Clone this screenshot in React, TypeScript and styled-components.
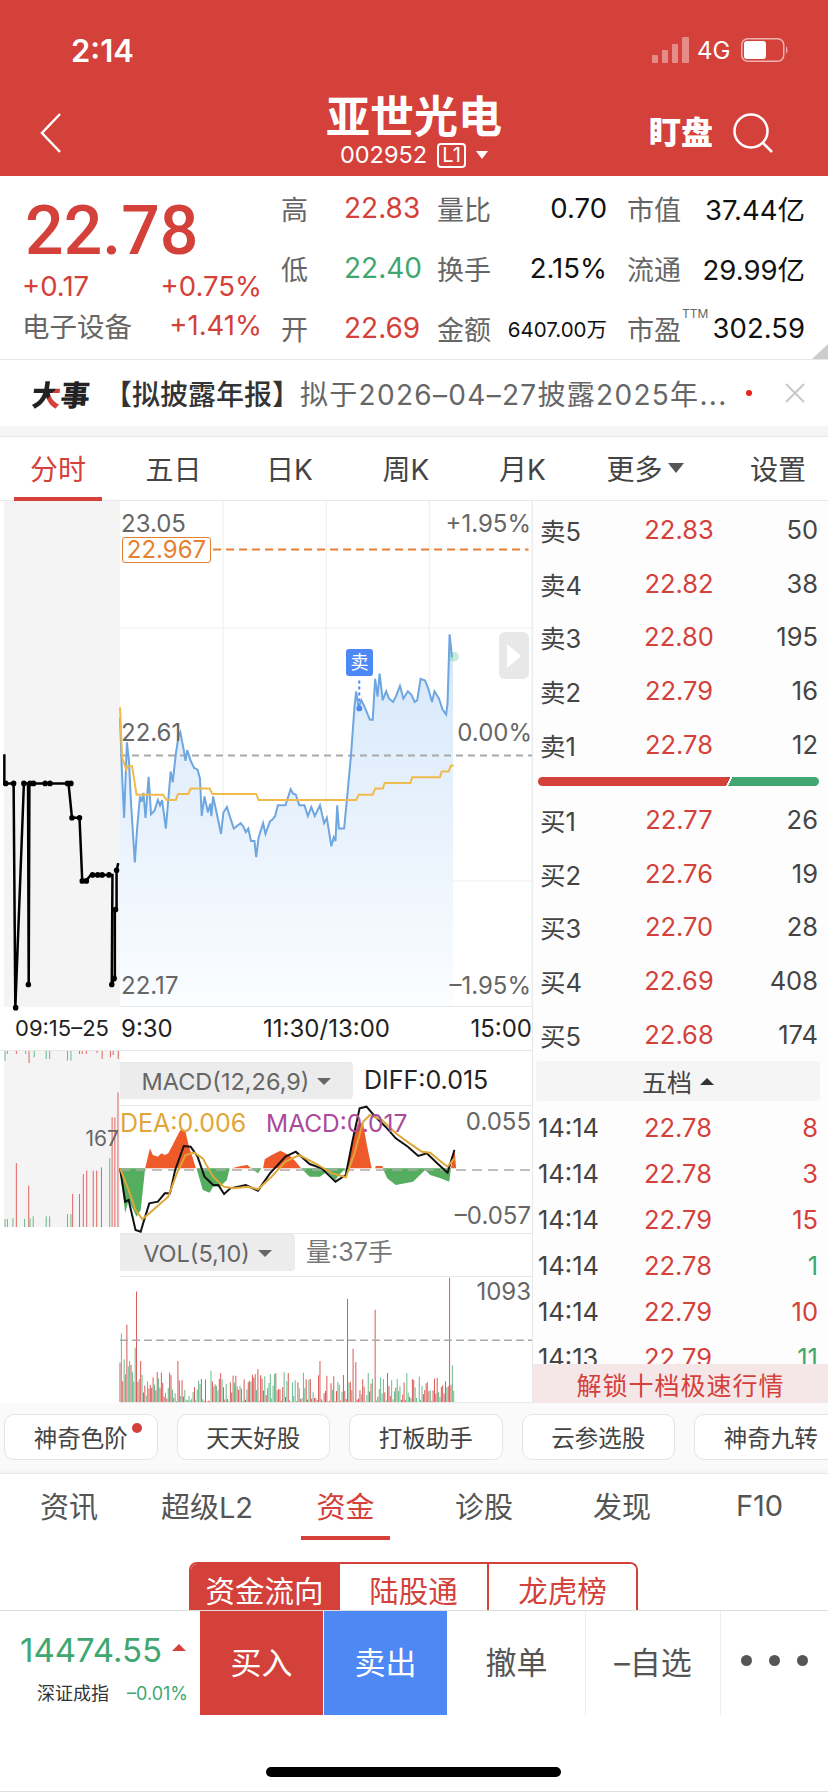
import React from 'react';
import styled, {createGlobalStyle} from 'styled-components';

const RED = '#d4403a';
const GREEN = '#3fa76f';

const GlobalStyle = createGlobalStyle`
  html, body {
    margin: 0;
    padding: 0;
    background: #fff;
    font-family: Inter, "Noto Sans CJK SC", sans-serif;
  }
  * {
    box-sizing: border-box;
  }
`;

const Page = styled.div`
  width: 828px;
  height: 1792px;
  overflow: hidden;
  display: flex;
  flex-direction: column;
  background: #fff;
`;

/* ---------- header ---------- */
const Header = styled.header`
  height: 176px;
  background: ${RED};
  color: #fff;
  position: relative;
  flex-shrink: 0;
`;

const StatusBar = styled.div`
  height: 88px;
  padding: 12px 40px 0 71px;
  display: flex;
  align-items: center;
  justify-content: space-between;
`;

const Clock = styled.span`
  font-size: 31px;
  font-weight: 600;
`;

const StatusRight = styled.div`
  display: flex;
  align-items: center;
  gap: 8px;
`;

const NetLabel = styled.span`
  font-size: 24px;
  width: 36px;
  color: #fff;
`;

const NavBar = styled.div`
  height: 88px;
  display: grid;
  grid-template-columns: 1fr auto 1fr;
  align-items: start;
`;

const BackBtn = styled.div`
  padding: 25px 0 0 40px;
`;

const Title = styled.div`
  display: flex;
  flex-direction: column;
  align-items: center;
`;

const TitleName = styled.div`
  font-size: 44px;
  font-weight: 700;
  line-height: 52px;
  margin-top: 3px;
`;

const CodeRow = styled.div`
  display: flex;
  align-items: center;
  font-size: 23.5px;
  line-height: 26px;
  gap: 10px;
  margin-top: -1px;
`;

const LevelTag = styled.span`
  border: 2px solid #fff;
  border-radius: 4px;
  width: 29px;
  height: 25px;
  font-size: 20px;
  line-height: 21px;
  text-align: center;
`;

const DownTri = styled.span`
  width: 0;
  height: 0;
  border-left: 6px solid transparent;
  border-right: 6px solid transparent;
  border-top: 8px solid #fff;
`;

const NavRight = styled.div`
  display: flex;
  justify-content: flex-end;
  align-items: center;
  padding: 25px 55px 0 0;
  gap: 20px;
`;

const Watch = styled.span`
  font-size: 32px;
  font-weight: 900;
  line-height: 38px;
`;

/* ---------- quote ---------- */
const Quote = styled.section`
  height: 184px;
  display: flex;
  flex-shrink: 0;
  position: relative;
  border-bottom: 1px solid #e6e6e6;
`;

const QuoteMain = styled.div`
  width: 281px;
  padding: 23px 19px 0 22px;
`;

const BigPrice = styled.div`
  font-family: Roboto, "Liberation Sans", sans-serif;
  font-size: 68px;
  font-weight: 500;
  line-height: 64px;
  color: ${RED};
  margin-left: 3px;
`;

const QuoteRow = styled.div<{$top: number}>`
  display: flex;
  justify-content: space-between;
  align-items: center;
  margin-top: ${(p) => p.$top}px;
  height: 30px;
  font-size: 27.5px;
  color: ${RED};
`;

const Sector = styled.span`
  color: #666;
  font-size: 27.5px;
`;

const StatGrid = styled.div`
  display: grid;
  grid-template-columns: 63px 93px 55px 115px 20px 55px 123px;
  grid-auto-rows: 60px;
  padding-top: 2px;
  align-items: center;
`;

const StatLabel = styled.span`
  font-size: 27px;
  color: #666;
  white-space: nowrap;
  position: relative;
`;

const StatPrice = styled.span<{$color: string}>`
  font-size: 28px;
  color: ${(p) => p.$color};
`;

const StatValue = styled.span<{$small?: boolean}>`
  font-size: ${(p) => (p.$small ? 20.5 : 27.5)}px;
  color: #111;
  text-align: right;
  white-space: nowrap;
`;

const Sup = styled.sup`
  position: absolute;
  left: 55px;
  top: -2px;
  font-size: 12px;
  color: #666;
  line-height: 14px;
`;

const Corner = styled.div`
  position: absolute;
  right: 0;
  bottom: 0;
  width: 0;
  height: 0;
  border-left: 16px solid transparent;
  border-bottom: 15px solid #ccc;
`;

/* ---------- event row ---------- */
const EventRow = styled.div`
  height: 66px;
  display: flex;
  align-items: center;
  padding-left: 32px;
  flex-shrink: 0;
  font-size: 28px;
  white-space: nowrap;
`;

const EventTag = styled.span`
  font-size: 29px;
  font-weight: 900;
  width: 72px;
  color: #222;
  display: inline-block;
  transform: skewX(-6deg);
`;

const EventBig = styled.span`
  background: linear-gradient(125deg, #222 58%, ${RED} 58%);
  -webkit-background-clip: text;
  background-clip: text;
  color: transparent;
`;

const EventHead = styled.span`
  font-weight: 500;
  color: #333;
`;

const EventText = styled.span`
  color: #666;
  letter-spacing: 1.3px;
`;

const EventDot = styled.span`
  width: 6px;
  height: 6px;
  border-radius: 50%;
  background: #e5241c;
  position: absolute;
  left: 746px;
`;

const EventClose = styled.span`
  position: absolute;
  left: 785px;
  display: flex;
`;

const EventWrap = styled.div`
  position: relative;
  display: flex;
  align-items: center;
`;

const Band = styled.div<{$h: number}>`
  height: ${(p) => p.$h}px;
  background: #f5f5f5;
  border-bottom: 1px solid #e8e8e8;
  flex-shrink: 0;
`;

/* ---------- period tabs ---------- */
const PeriodTabs = styled.nav`
  height: 64px;
  flex-shrink: 0;
  position: relative;
  border-bottom: 1px solid #e8e8e8;
  display: grid;
  grid-template-columns: 116px 115px 117px 116px 117px 128px 119px;
`;

const PeriodTab = styled.span<{$on?: boolean}>`
  font-size: 28px;
  color: ${(p) => (p.$on ? RED : '#444')};
  display: flex;
  align-items: center;
  justify-content: center;
  gap: 5px;
  height: 64px;
  padding-bottom: 2px;
  position: relative;
  ${(p) =>
    p.$on &&
    `&::after {
      content: '';
      position: absolute;
      left: 14px;
      width: 88px;
      bottom: 0;
      height: 4px;
      background: ${RED};
    }`}
`;

const SettingTab = styled(PeriodTab)`
  padding-left: 19px;
`;

const TabTri = styled.span`
  width: 0;
  height: 0;
  border-left: 8px solid transparent;
  border-right: 8px solid transparent;
  border-top: 10px solid #555;
`;

/* ---------- market ---------- */
const Market = styled.section`
  display: flex;
  height: 902px;
  flex-shrink: 0;
`;

const ChartCol = styled.div`
  width: 532px;
  display: flex;
  flex-direction: column;
  flex-shrink: 0;
`;

const MainChartRow = styled.div`
  display: flex;
  height: 506px;
  padding-left: 4px;
`;

const PrePanel = styled.div`
  width: 116px;
  background: #f4f4f4;
  flex-shrink: 0;
  position: relative;
`;

const ChartBox = styled.div`
  width: 412px;
  position: relative;
  border-bottom: 1px solid #e8e8e8;
`;

const Plot = styled.svg`
  display: block;
  width: 100%;
  height: 100%;
  overflow: visible;
`;

const ChartLabel = styled.span<{$x?: number; $r?: number; $y: number; $c?: string; $size?: number}>`
  position: absolute;
  ${(p) => (p.$r !== undefined ? `right: ${p.$r}px;` : `left: ${p.$x}px;`)}
  top: ${(p) => p.$y}px;
  transform: translateY(-50%);
  font-size: ${(p) => p.$size || 24}px;
  line-height: 28px;
  color: ${(p) => p.$c || '#666'};
  white-space: nowrap;
`;

const PriceTag = styled.span`
  position: absolute;
  left: 2px;
  top: 36px;
  width: 89px;
  height: 26px;
  border: 1px solid #e58033;
  border-radius: 3px;
  color: #e58033;
  font-size: 24px;
  line-height: 24px;
  text-align: center;
  background: #fff;
`;

const SellMark = styled.span`
  position: absolute;
  left: 226px;
  top: 148px;
  width: 27px;
  height: 27px;
  background: #4d88f5;
  border-radius: 3px;
  color: #fff;
  font-size: 18px;
  line-height: 27px;
  text-align: center;
`;

const PlayBtn = styled.span`
  position: absolute;
  left: 379px;
  top: 131px;
  width: 30px;
  height: 47px;
  border-radius: 6px;
  background: #e8e8e8;
  display: flex;
  align-items: center;
  justify-content: center;
  &::after {
    content: '';
    border-top: 12px solid transparent;
    border-bottom: 12px solid transparent;
    border-left: 14px solid #fff;
  }
`;

const TimeAxis = styled.div`
  height: 44px;
  display: flex;
  align-items: center;
  font-size: 24px;
  color: #222;
  border-bottom: 1px solid #e8e8e8;
  padding-bottom: 1px;
`;

const TimePre = styled.span`
  width: 120px;
  padding-left: 15px;
  font-size: 22px;
  white-space: nowrap;
`;

const TimeMain = styled.div`
  width: 412px;
  display: grid;
  grid-template-columns: 1fr auto 1fr;
  padding-left: 1px;
`;

const TimeEnd = styled.span`
  text-align: right;
`;

const IndicatorRow = styled.div`
  display: flex;
  height: 182px;
  padding-left: 4px;
`;

const PreVol = styled.div`
  width: 116px;
  height: 176px;
  background: #f4f4f4;
  position: relative;
  flex-shrink: 0;
`;

const IndicatorBody = styled.div`
  width: 412px;
  display: flex;
  flex-direction: column;
`;

const IndicatorHead = styled.div<{$top: number; $h: number}>`
  height: ${(p) => p.$h}px;
  padding-top: ${(p) => p.$top}px;
  display: flex;
  border-bottom: 1px solid #e8e8e8;
  flex-shrink: 0;
`;

const Pill = styled.div<{$w: number}>`
  width: ${(p) => p.$w}px;
  height: 37px;
  background: #ececec;
  border-radius: 0 4px 4px 0;
  color: #666;
  font-size: 23.5px;
  display: flex;
  align-items: center;
  justify-content: center;
  gap: 8px;
  border-top: 1px solid #e8e8e8;
`;

const PillTri = styled.span`
  width: 0;
  height: 0;
  border-left: 7px solid transparent;
  border-right: 7px solid transparent;
  border-top: 7px solid #666;
`;

const HeadValue = styled.span<{$c: string}>`
  font-size: 25px;
  color: ${(p) => p.$c};
  margin-left: 11px;
  line-height: 37px;
`;

const IndicatorPlot = styled.div`
  flex: 1;
  position: relative;
  min-height: 0;
`;

const VolSection = styled.div`
  display: flex;
  flex-direction: column;
  flex: 1;
  margin-left: 120px;
  width: 412px;
  min-height: 0;
  border-top: 1px solid #e8e8e8;
  border-bottom: 1px solid #e8e8e8;
`;

/* ---------- order book ---------- */
const BookCol = styled.aside`
  flex: 1;
  border-left: 1px solid #e8e8e8;
  display: flex;
  flex-direction: column;
  background: #fdfdfd;
  padding-top: 2px;
`;

const BookRows = styled.div<{$h: number}>`
  height: ${(p) => p.$h}px;
  display: flex;
  flex-direction: column;
  flex-shrink: 0;
`;

const BookRow = styled.div`
  flex: 1;
  display: grid;
  grid-template-columns: 1fr 1fr 1fr;
  align-items: center;
  padding: 0 10px 0 7px;
  font-size: 25.5px;
  color: #444;
`;

const BookPrice = styled.span`
  color: ${RED};
  text-align: center;
`;

const BookQty = styled.span`
  text-align: right;
`;

const DepthBar = styled.div`
  height: 9px;
  margin: 6px 9px 7px 5px;
  display: flex;
  flex-shrink: 0;
  border-radius: 5px;
  overflow: hidden;
`;

const DepthPart = styled.div<{$c: string; $grow: number}>`
  flex: ${(p) => p.$grow};
  background: ${(p) => p.$c};
`;

const DepthCut = styled.div`
  width: 6px;
  background: linear-gradient(118deg, ${RED} 42%, #fff 42%, #fff 62%, ${GREEN} 62%);
`;

const FoldBar = styled.div`
  margin: 0 8px 0 3px;
  height: 40px;
  background: #f5f5f5;
  border-radius: 4px;
  flex-shrink: 0;
  display: flex;
  align-items: center;
  justify-content: center;
  gap: 8px;
  font-size: 25px;
  color: #444;
`;

const FoldTri = styled.span`
  width: 0;
  height: 0;
  border-left: 7px solid transparent;
  border-right: 7px solid transparent;
  border-bottom: 7px solid #333;
`;

const Trades = styled.div`
  flex: 1;
  overflow: hidden;
  min-height: 0;
  padding-top: 3px;
`;

const TradeRow = styled.div`
  height: 46px;
  display: grid;
  grid-template-columns: 1fr 1fr 1fr;
  align-items: center;
  padding: 0 10px 0 5px;
  font-size: 25.5px;
  color: #444;
`;

const TradeQty = styled.span<{$up: boolean}>`
  text-align: right;
  color: ${(p) => (p.$up ? RED : GREEN)};
`;

const UnlockBar = styled.div`
  height: 39px;
  background: #f5e7e7;
  color: ${RED};
  font-size: 25px;
  display: flex;
  align-items: center;
  justify-content: center;
  flex-shrink: 0;
  letter-spacing: 1px;
`;

/* ---------- chips + lower tabs ---------- */
const ChipBar = styled.div`
  height: 67px;
  background: #fafafa;
  display: flex;
  gap: 19px;
  padding: 11px 0 0 4px;
  flex-shrink: 0;
`;

const Chip = styled.div`
  width: 153.5px;
  height: 46px;
  flex-shrink: 0;
  border: 1px solid #e4e4e4;
  border-radius: 10px;
  background: #fff;
  display: flex;
  align-items: center;
  justify-content: center;
  font-size: 23.5px;
  color: #444;
  position: relative;
`;

const ChipDot = styled.span`
  position: absolute;
  right: 15px;
  top: 8px;
  width: 10px;
  height: 10px;
  border-radius: 50%;
  background: ${RED};
`;

const LowerTabs = styled.nav`
  height: 66px;
  display: grid;
  grid-template-columns: 138px 138px 139px 138px 138px 137px;
  flex-shrink: 0;
`;

const LowerTab = styled.span<{$on?: boolean}>`
  font-size: 29px;
  color: ${(p) => (p.$on ? RED : '#555')};
  display: flex;
  align-items: center;
  justify-content: center;
  padding-bottom: 4px;
  position: relative;
  ${(p) =>
    p.$on &&
    `&::after {
      content: '';
      position: absolute;
      left: 25px;
      width: 89px;
      bottom: 0;
      height: 4px;
      background: ${RED};
    }`}
`;

const Segments = styled.div`
  margin: 22px 0 0 189px;
  width: 449px;
  height: 48px;
  display: flex;
  flex-shrink: 0;
  border: 2px solid ${RED};
  border-bottom: none;
  border-radius: 8px 8px 0 0;
  overflow: hidden;
`;

const Segment = styled.span<{$on?: boolean}>`
  flex: 1;
  font-size: 29.5px;
  padding-top: 3px;
  display: flex;
  align-items: center;
  justify-content: center;
  white-space: nowrap;
  color: ${(p) => (p.$on ? '#fff' : RED)};
  background: ${(p) => (p.$on ? RED : '#fff')};
  & + & {
    border-left: 2px solid ${RED};
  }
`;

/* ---------- bottom bar ---------- */
const BottomBar = styled.footer`
  flex: 1;
  border-top: 1px solid #ddd;
  border-bottom: 1px solid #ddd;
  display: flex;
  flex-direction: column;
  align-items: stretch;
`;

const ActionRow = styled.div`
  height: 104px;
  display: flex;
  flex-shrink: 0;
`;

const IndexCell = styled.div`
  width: 200px;
  padding: 21px 0 0 20px;
  flex-shrink: 0;
`;

const IndexTop = styled.div`
  display: flex;
  align-items: flex-start;
  gap: 10px;
  font-size: 33px;
  line-height: 36px;
  white-space: nowrap;
  color: ${GREEN};
`;

const IndexTri = styled.span`
  width: 0;
  height: 0;
  margin-top: 12px;
  border-left: 7px solid transparent;
  border-right: 7px solid transparent;
  border-bottom: 7px solid ${RED};
`;

const IndexBottom = styled.div`
  display: flex;
  justify-content: space-between;
  padding: 0 12px 0 17px;
  margin-top: 14px;
  font-size: 18px;
  line-height: 24px;
  color: #333;
`;

const IndexPct = styled.span`
  color: ${GREEN};
  font-size: 18px;
`;

const TradeBtn = styled.div<{$bg: string}>`
  width: 123px;
  background: ${(p) => p.$bg};
  color: #fff;
  font-size: 31px;
  display: flex;
  align-items: center;
  justify-content: center;
  padding-bottom: 6px;
  margin-right: 1px;
  flex-shrink: 0;
`;

const PlainBtn = styled.div<{$w: number; $line?: boolean}>`
  width: ${(p) => p.$w}px;
  font-size: 31px;
  color: #555;
  display: flex;
  align-items: center;
  justify-content: center;
  gap: 10px;
  padding-bottom: 6px;
  flex-shrink: 0;
  ${(p) => p.$line && 'border-left: 1px solid #eee;'}
`;

const Dot = styled.span`
  width: 11px;
  height: 11px;
  border-radius: 50%;
  background: #555;
  margin: 0 3.5px;
  flex-shrink: 0;
`;

const HomeBar = styled.div`
  width: 295px;
  height: 10px;
  background: #000;
  border-radius: 5px;
  margin: 52px 0 0 266px;
`;

/* ---------- data ---------- */
const pts = (list: number[][]) => list.map((p) => p.join(',')).join(' ');

const priceLine = [
  [350, 640], [356, 800], [362, 920], [370, 708], [376, 760], [382, 880], [393, 1045], [400, 945], [408, 860], [413, 875],
  [418, 850], [424, 920], [433, 805], [440, 910], [450, 900], [460, 870], [466, 885], [472, 870], [483, 950], [497, 790],
  [503, 820], [512, 740], [520, 690], [525, 680], [535, 730], [540, 760], [545, 730], [555, 760], [565, 780], [575, 785],
  [582, 810], [587, 915], [595, 860], [605, 905], [612, 880], [615, 915], [620, 860], [630, 905], [643, 965], [650, 905],
  [660, 890], [670, 920], [680, 950], [700, 935], [708, 945], [715, 960], [722, 950], [730, 985], [740, 985], [745, 1030],
  [752, 975], [765, 935], [772, 965], [785, 930], [792, 925], [800, 915], [808, 885], [830, 885], [845, 840], [852, 852],
  [860, 855], [870, 885], [885, 885], [895, 915], [905, 890], [915, 915], [930, 885], [942, 935], [950, 920], [963, 1000],
  [970, 975], [975, 985], [980, 885], [985, 950], [1000, 950], [1010, 850], [1020, 745], [1030, 610], [1035, 565],
  [1042, 610], [1050, 590], [1060, 610], [1075, 645], [1083, 645], [1090, 530], [1097, 580], [1103, 515], [1112, 590],
  [1122, 565], [1130, 585], [1142, 595], [1150, 580], [1162, 550], [1172, 585], [1185, 565], [1195, 575], [1205, 595],
  [1212, 590], [1222, 530], [1235, 535], [1245, 560], [1255, 595], [1262, 565], [1275, 585], [1285, 615], [1296, 630],
  [1300, 600], [1306, 405], [1313, 470],
];

const avgLine = [
  [350, 610], [356, 750], [368, 785], [372, 775], [385, 775], [398, 855], [475, 855], [485, 870], [512, 870], [518, 853],
  [548, 853], [555, 838], [610, 838], [618, 853], [745, 853], [752, 870], [1035, 870], [1043, 855], [1083, 855], [1090, 838],
  [1112, 838], [1118, 822], [1192, 822], [1198, 806], [1278, 806], [1283, 790], [1303, 790], [1310, 773], [1318, 773],
];

const auctionLine = [
  [13, 740], [13, 822], [40, 822], [45, 1450], [70, 822], [82, 822], [84, 1385], [86, 822], [100, 822], [140, 822],
  [200, 822], [210, 918], [232, 918], [240, 1095], [250, 1095], [265, 1078], [318, 1078], [328, 1078], [326, 1385],
  [335, 1365], [335, 1175], [340, 1175], [340, 1065], [345, 1045],
];

const auctionDots = [
  [17, 822], [40, 822], [46, 1450], [70, 822], [83, 1385], [88, 822], [98, 822], [132, 822], [146, 822], [197, 822], [207, 822],
  [210, 918], [232, 918], [240, 1095], [252, 1095], [270, 1078], [285, 1078], [298, 1078], [318, 1078], [326, 1385],
  [333, 1368], [337, 1175], [340, 1065],
];

const preBars = [
  [15, 540, 'g'], [22, 540, 'g'], [38, 538, 'g'], [48, 372, 'r'], [72, 540, 'g'], [84, 440, 'r'], [88, 538, 'g'], [97, 532, 'g'],
  [135, 532, 'g'], [145, 532, 'g'], [197, 525, 'g'], [207, 525, 'g'], [212, 465, 'r'], [232, 465, 'r'], [243, 405, 'r'],
  [253, 395, 'r'], [272, 395, 'r'], [282, 395, 'r'], [296, 385, 'r'], [320, 358, 'g'], [327, 235, 'r'], [335, 235, 'r'], [344, 160, 'r'],
] as const;

const preTopBars = [
  [15, 65, 'g'], [22, 45, 'g'], [48, 45, 'r'], [75, 45, 'g'], [85, 72, 'r'], [100, 55, 'g'], [135, 60, 'g'], [145, 60, 'g'], [197, 65, 'g'],
  [207, 65, 'g'], [232, 45, 'r'], [240, 45, 'r'], [252, 45, 'r'], [283, 42, 'r'], [298, 60, 'r'], [322, 55, 'r'], [330, 48, 'r'], [345, 60, 'r'],
] as const;

const histGreen = [
  [[350, 385], [365, 520], [375, 480], [398, 530], [410, 510], [423, 385]],
  [[572, 385], [590, 450], [610, 458], [620, 440], [640, 440], [660, 420], [668, 385]],
  [[730, 385], [750, 400], [760, 385]],
  [[875, 385], [900, 410], [930, 410], [950, 395], [975, 420], [985, 405], [1005, 385]],
  [[1112, 385], [1125, 415], [1150, 435], [1200, 425], [1235, 390], [1250, 405], [1280, 415], [1305, 425], [1310, 385]],
];

const histRed = [
  [[423, 385], [437, 325], [445, 345], [460, 350], [470, 340], [480, 345], [490, 340], [500, 320], [510, 300], [525, 270], [540, 275], [550, 320], [560, 350], [570, 385]],
  [[675, 385], [700, 378], [720, 375], [730, 385]],
  [[765, 385], [770, 358], [790, 345], [815, 332], [840, 345], [860, 365], [875, 385]],
  [[1008, 385], [1020, 320], [1040, 250], [1055, 250], [1065, 310], [1080, 385]],
  [[1090, 385], [1092, 378], [1112, 378], [1112, 385]],
  [[1310, 385], [1320, 325], [1325, 385]],
];

const diffLine = [
  [350, 385], [365, 485], [375, 480], [395, 570], [410, 575], [420, 540], [435, 490], [460, 485], [480, 460], [495, 460], [510, 390],
  [535, 318], [555, 320], [575, 350], [595, 410], [620, 435], [635, 435], [652, 462], [670, 445], [715, 435], [750, 452], [785, 400],
  [830, 350], [860, 335], [900, 372], [935, 385], [975, 425], [1005, 405], [1025, 300], [1045, 205], [1065, 200], [1090, 230],
  [1120, 260], [1150, 295], [1185, 320], [1215, 348], [1240, 340], [1270, 370], [1300, 398], [1320, 330],
];

const deaLine = [
  [350, 385], [375, 450], [395, 510], [415, 538], [440, 515], [490, 470], [515, 400], [540, 345], [565, 338], [590, 355], [620, 410],
  [650, 440], [680, 445], [720, 440], [750, 448], [790, 410], [830, 365], [870, 345], [920, 372], [965, 400], [1005, 412], [1030, 340],
  [1055, 245], [1075, 225], [1110, 240], [1150, 280], [1190, 310], [1225, 335], [1250, 338], [1275, 360], [1300, 380], [1320, 355],
];

const volPeaks: Record<number, [number, 'r' | 'g']> = {
  350: [970, 'r'], 354: [882, 'g'], 362: [960, 'g'], 370: [855, 'r'], 378: [965, 'g'], 394: [925, 'g'], 398: [755, 'r'], 410: [965, 'r'],
  518: [965, 'r'], 614: [995, 'g'], 750: [990, 'r'], 930: [965, 'r'], 1010: [777, 'r'], 1026: [928, 'r'], 1034: [968, 'r'], 1090: [810, 'r'],
  1306: [713, 'r'], 1314: [978, 'g'],
};

const volBars = Array.from({length: 243}, (_, i) => {
  const x = 350 + i * 4;
  const peak = volPeaks[x];
  const seed = Math.abs(Math.sin(i * 12.9898) * 43758.5453) % 1;
  const seed2 = Math.abs(Math.sin(i * 78.233) * 12543.123) % 1;
  if (peak) return {x, top: peak[0], up: peak[1] === 'r'};
  const early = i < 16 ? 60 : 0;
  return {x, top: 1088 - Math.pow(seed, 1.4) * 90 - early, up: seed2 > 0.5};
});

const sells = [
  ['卖5', '22.83', '50'],
  ['卖4', '22.82', '38'],
  ['卖3', '22.80', '195'],
  ['卖2', '22.79', '16'],
  ['卖1', '22.78', '12'],
];

const buys = [
  ['买1', '22.77', '26'],
  ['买2', '22.76', '19'],
  ['买3', '22.70', '28'],
  ['买4', '22.69', '408'],
  ['买5', '22.68', '174'],
];

const trades: Array<[string, string, string, boolean]> = [
  ['14:14', '22.78', '8', true],
  ['14:14', '22.78', '3', true],
  ['14:14', '22.79', '15', true],
  ['14:14', '22.78', '1', false],
  ['14:14', '22.79', '10', true],
  ['14:13', '22.79', '11', false],
];

const chips = ['神奇色阶', '天天好股', '打板助手', '云参选股', '神奇九转'];
const lowerTabs = ['资讯', '超级L2', '资金', '诊股', '发现', 'F10'];

function MainPlot() {
  const area = `350,1448 ${pts(priceLine)} 1316,470 1316,1448`;
  return (
    <Plot viewBox="350 31 1195 1417" preserveAspectRatio="none">
      <defs>
        <linearGradient id="areaFill" gradientUnits="userSpaceOnUse" x1="0" y1="400" x2="0" y2="1448">
          <stop offset="0" stopColor="#d5e7fa" />
          <stop offset="1" stopColor="#fbfdff" />
        </linearGradient>
      </defs>
      {[649, 948, 1247, 1545].map((x) => (
        <line key={x} x1={x} x2={x} y1={31} y2={1448} stroke="#eee" strokeWidth="1" vectorEffect="non-scaling-stroke" />
      ))}
      {[387, 1097].map((y) => (
        <line key={y} x1={350} x2={1545} y1={y} y2={y} stroke="#eee" strokeWidth="1" vectorEffect="non-scaling-stroke" />
      ))}
      <polygon points={area} fill="url(#areaFill)" />
      <line x1={350} x2={1545} y1={745} y2={745} stroke="#aaa" strokeWidth="2" strokeDasharray="7 5" vectorEffect="non-scaling-stroke" />
      <line x1={620} x2={1535} y1={167} y2={167} stroke="#e58033" strokeWidth="2" strokeDasharray="8 5" vectorEffect="non-scaling-stroke" />
      <polyline points={pts(priceLine)} fill="none" stroke="#6ea6e0" strokeWidth="2" vectorEffect="non-scaling-stroke" />
      <polyline points={pts(avgLine)} fill="none" stroke="#f0bb4c" strokeWidth="2" vectorEffect="non-scaling-stroke" />
      <line x1={1044} x2={1044} y1={535} y2={605} stroke="#4d88f5" strokeWidth="2" strokeDasharray="3 3" vectorEffect="non-scaling-stroke" />
      <ellipse cx={1044} cy={613} rx={8.5} ry={8} fill="#4d88f5" />
      <ellipse cx={1318} cy={468} rx={15} ry={14} fill="#5cc49a" opacity={0.35} />
    </Plot>
  );
}

function AuctionPlot() {
  return (
    <Plot viewBox="12 31 338 1417" preserveAspectRatio="none">
      <polyline points={pts(auctionLine)} fill="none" stroke="#000" strokeWidth="2.5" vectorEffect="non-scaling-stroke" />
      {auctionDots.map(([x, y], i) => (
        <ellipse key={i} cx={x} cy={y} rx={8} ry={8} fill="#000" />
      ))}
    </Plot>
  );
}

function PreVolPlot() {
  const color = (k: string) => (k === 'r' ? '#e06a66' : '#69bb8e');
  return (
    <Plot viewBox="12 36 338 528" preserveAspectRatio="none">
      {preBars.map(([x, top, k], i) => (
        <rect key={i} x={x - 1.5} y={top} width={3} height={564 - top} fill={color(k)} />
      ))}
      {preTopBars.map(([x, bottom, k], i) => (
        <rect key={i} x={x - 1.5} y={36} width={3} height={bottom - 36} fill={color(k)} />
      ))}
    </Plot>
  );
}

function MacdPlot() {
  return (
    <Plot viewBox="350 198 1195 381" preserveAspectRatio="none">
      {histGreen.map((p, i) => (
        <polygon key={i} points={pts(p)} fill="#55ad5f" />
      ))}
      {histRed.map((p, i) => (
        <polygon key={i} points={pts(p)} fill="#ef5a2a" />
      ))}
      <line x1={350} x2={1545} y1={390} y2={390} stroke="#aaa" strokeWidth="1.5" strokeDasharray="10 6" vectorEffect="non-scaling-stroke" />
      <polyline points={pts(diffLine)} fill="none" stroke="#111" strokeWidth="2" vectorEffect="non-scaling-stroke" />
      <polyline points={pts(deaLine)} fill="none" stroke="#dfa738" strokeWidth="2" vectorEffect="non-scaling-stroke" />
    </Plot>
  );
}

function VolPlot() {
  return (
    <Plot viewBox="350 711 1195 378" preserveAspectRatio="none">
      {volBars.map((b) => (
        <rect key={b.x} x={b.x - 1.4} y={b.top} width={2.8} height={1089 - b.top} fill={b.up ? '#d9534f' : '#63b98a'} />
      ))}
      <line x1={350} x2={1545} y1={902} y2={902} stroke="#aaa" strokeWidth="1.5" strokeDasharray="8 4" vectorEffect="non-scaling-stroke" />
    </Plot>
  );
}

export default function App() {
  return (
    <Page>
      <GlobalStyle />
      <Header>
        <StatusBar>
          <Clock>2:14</Clock>
          <StatusRight>
            <svg width="37" height="26" viewBox="0 0 37 26">
              <g fill="#fff" opacity="0.4">
                <rect x="0" y="18" width="6" height="8" rx="1" />
                <rect x="10" y="13" width="6" height="13" rx="1" />
                <rect x="20" y="7" width="6" height="19" rx="1" />
                <rect x="30" y="0" width="7" height="26" rx="1" />
              </g>
            </svg>
            <NetLabel>4G</NetLabel>
            <svg width="47" height="24" viewBox="0 0 47 24">
              <rect x="0.75" y="0.75" width="42" height="22.5" rx="6" fill="none" stroke="#fff" strokeOpacity="0.6" strokeWidth="1.5" />
              <rect x="3" y="3" width="22" height="18" rx="3" fill="#fff" />
              <path d="M45 8 C47 10 47 14 45 16 Z" fill="#fff" fillOpacity="0.6" />
            </svg>
          </StatusRight>
        </StatusBar>
        <NavBar>
          <BackBtn>
            <svg width="22" height="40" viewBox="0 0 22 40">
              <path d="M20 1 L2 20 L20 39" fill="none" stroke="#fff" strokeWidth="2.5" />
            </svg>
          </BackBtn>
          <Title>
            <TitleName>亚世光电</TitleName>
            <CodeRow>
              002952
              <LevelTag>L1</LevelTag>
              <DownTri />
            </CodeRow>
          </Title>
          <NavRight>
            <Watch>盯盘</Watch>
            <svg width="40" height="40" viewBox="0 0 40 40">
              <circle cx="18" cy="18" r="16.5" fill="none" stroke="#fff" strokeWidth="2.5" />
              <path d="M30 30 L39 39" stroke="#fff" strokeWidth="2.5" />
            </svg>
          </NavRight>
        </NavBar>
      </Header>

      <Quote>
        <QuoteMain>
          <BigPrice>22.78</BigPrice>
          <QuoteRow $top={8}>
            <span>+0.17</span>
            <span>+0.75%</span>
          </QuoteRow>
          <QuoteRow $top={9}>
            <Sector>电子设备</Sector>
            <span>+1.41%</span>
          </QuoteRow>
        </QuoteMain>
        <StatGrid>
          <StatLabel>高</StatLabel>
          <StatPrice $color={RED}>22.83</StatPrice>
          <StatLabel>量比</StatLabel>
          <StatValue>0.70</StatValue>
          <span />
          <StatLabel>市值</StatLabel>
          <StatValue>37.44亿</StatValue>

          <StatLabel>低</StatLabel>
          <StatPrice $color={GREEN}>22.40</StatPrice>
          <StatLabel>换手</StatLabel>
          <StatValue>2.15%</StatValue>
          <span />
          <StatLabel>流通</StatLabel>
          <StatValue>29.99亿</StatValue>

          <StatLabel>开</StatLabel>
          <StatPrice $color={RED}>22.69</StatPrice>
          <StatLabel>金额</StatLabel>
          <StatValue $small>6407.00万</StatValue>
          <span />
          <StatLabel>
            市盈<Sup>TTM</Sup>
          </StatLabel>
          <StatValue>302.59</StatValue>
        </StatGrid>
        <Corner />
      </Quote>

      <EventWrap>
        <EventRow>
          <EventTag>
            <EventBig>大</EventBig>事
          </EventTag>
          <EventHead>【拟披露年报】</EventHead>
          <EventText>拟于2026–04–27披露2025年...</EventText>
        </EventRow>
        <EventDot />
        <EventClose>
          <svg width="20" height="20" viewBox="0 0 20 20">
            <path d="M1 1 L19 19 M19 1 L1 19" stroke="#c8c8c8" strokeWidth="2" />
          </svg>
        </EventClose>
      </EventWrap>
      <Band $h={11} />

      <PeriodTabs>
        <PeriodTab $on>分时</PeriodTab>
        <PeriodTab>五日</PeriodTab>
        <PeriodTab>日K</PeriodTab>
        <PeriodTab>周K</PeriodTab>
        <PeriodTab>月K</PeriodTab>
        <PeriodTab>
          更多
          <TabTri />
        </PeriodTab>
        <SettingTab>设置</SettingTab>
      </PeriodTabs>

      <Market>
        <ChartCol>
          <MainChartRow>
            <PrePanel>
              <AuctionPlot />
            </PrePanel>
            <ChartBox>
              <MainPlot />
              <ChartLabel $x={1} $y={23}>23.05</ChartLabel>
              <ChartLabel $r={1} $y={23}>+1.95%</ChartLabel>
              <PriceTag>22.967</PriceTag>
              <ChartLabel $x={1} $y={232}>22.61</ChartLabel>
              <ChartLabel $r={0} $y={232}>0.00%</ChartLabel>
              <ChartLabel $x={1} $y={485}>22.17</ChartLabel>
              <ChartLabel $r={1} $y={485}>–1.95%</ChartLabel>
              <SellMark>卖</SellMark>
              <PlayBtn />
            </ChartBox>
          </MainChartRow>
          <TimeAxis>
            <TimePre>09:15–25</TimePre>
            <TimeMain>
              <span>9:30</span>
              <span>11:30/13:00</span>
              <TimeEnd>15:00</TimeEnd>
            </TimeMain>
          </TimeAxis>
          <IndicatorRow>
            <PreVol>
              <PreVolPlot />
              <ChartLabel $r={1} $y={88} $size={21}>167</ChartLabel>
            </PreVol>
            <IndicatorBody>
              <IndicatorHead $top={11} $h={55}>
                <Pill $w={233}>
                  MACD(12,26,9)
                  <PillTri />
                </Pill>
                <HeadValue $c="#222">DIFF:0.015</HeadValue>
              </IndicatorHead>
              <IndicatorPlot>
                <MacdPlot />
                <ChartLabel $x={0} $y={17} $size={25} $c="#dfa738">DEA:0.006</ChartLabel>
                <ChartLabel $x={146} $y={17} $size={24.5} $c="#ac4a9a">MACD:0.017</ChartLabel>
                <ChartLabel $r={1} $y={16}>0.055</ChartLabel>
                <ChartLabel $r={1} $y={110}>–0.057</ChartLabel>
              </IndicatorPlot>
            </IndicatorBody>
          </IndicatorRow>
          <VolSection>
            <IndicatorHead $top={0} $h={43}>
              <Pill $w={175}>
                VOL(5,10)
                <PillTri />
              </Pill>
              <HeadValue $c="#777">量:37手</HeadValue>
            </IndicatorHead>
            <IndicatorPlot>
              <VolPlot />
              <ChartLabel $r={1} $y={15}>1093</ChartLabel>
            </IndicatorPlot>
          </VolSection>
        </ChartCol>

        <BookCol>
          <BookRows $h={268}>
            {sells.map((r) => (
              <BookRow key={r[0]}>
                <span>{r[0]}</span>
                <BookPrice>{r[1]}</BookPrice>
                <BookQty>{r[2]}</BookQty>
              </BookRow>
            ))}
          </BookRows>
          <DepthBar>
            <DepthPart $c={RED} $grow={189} />
            <DepthCut />
            <DepthPart $c={GREEN} $grow={88} />
          </DepthBar>
          <BookRows $h={268}>
            {buys.map((r) => (
              <BookRow key={r[0]}>
                <span>{r[0]}</span>
                <BookPrice>{r[1]}</BookPrice>
                <BookQty>{r[2]}</BookQty>
              </BookRow>
            ))}
          </BookRows>
          <FoldBar>
            五档
            <FoldTri />
          </FoldBar>
          <Trades>
            {trades.map((t, i) => (
              <TradeRow key={i}>
                <span>{t[0]}</span>
                <BookPrice>{t[1]}</BookPrice>
                <TradeQty $up={t[3]}>{t[2]}</TradeQty>
              </TradeRow>
            ))}
          </Trades>
          <UnlockBar>解锁十档极速行情</UnlockBar>
        </BookCol>
      </Market>

      <ChipBar>
        {chips.map((c, i) => (
          <Chip key={c}>
            {c}
            {i === 0 && <ChipDot />}
          </Chip>
        ))}
      </ChipBar>
      <Band $h={4} />

      <LowerTabs>
        {lowerTabs.map((t) => (
          <LowerTab key={t} $on={t === '资金'}>
            {t}
          </LowerTab>
        ))}
      </LowerTabs>

      <Segments>
        <Segment $on>资金流向</Segment>
        <Segment>陆股通</Segment>
        <Segment>龙虎榜</Segment>
      </Segments>

      <BottomBar>
        <ActionRow>
          <IndexCell>
            <IndexTop>
              14474.55
              <IndexTri />
            </IndexTop>
            <IndexBottom>
              <span>深证成指</span>
              <IndexPct>–0.01%</IndexPct>
            </IndexBottom>
          </IndexCell>
          <TradeBtn $bg={RED}>买入</TradeBtn>
          <TradeBtn $bg="#4d88f5">卖出</TradeBtn>
          <PlainBtn $w={137}>撤单</PlainBtn>
          <PlainBtn $w={135} $line>
            –自选
          </PlainBtn>
          <PlainBtn $w={107} $line>
            <Dot />
            <Dot />
            <Dot />
          </PlainBtn>
        </ActionRow>
        <HomeBar />
      </BottomBar>
    </Page>
  );
}
